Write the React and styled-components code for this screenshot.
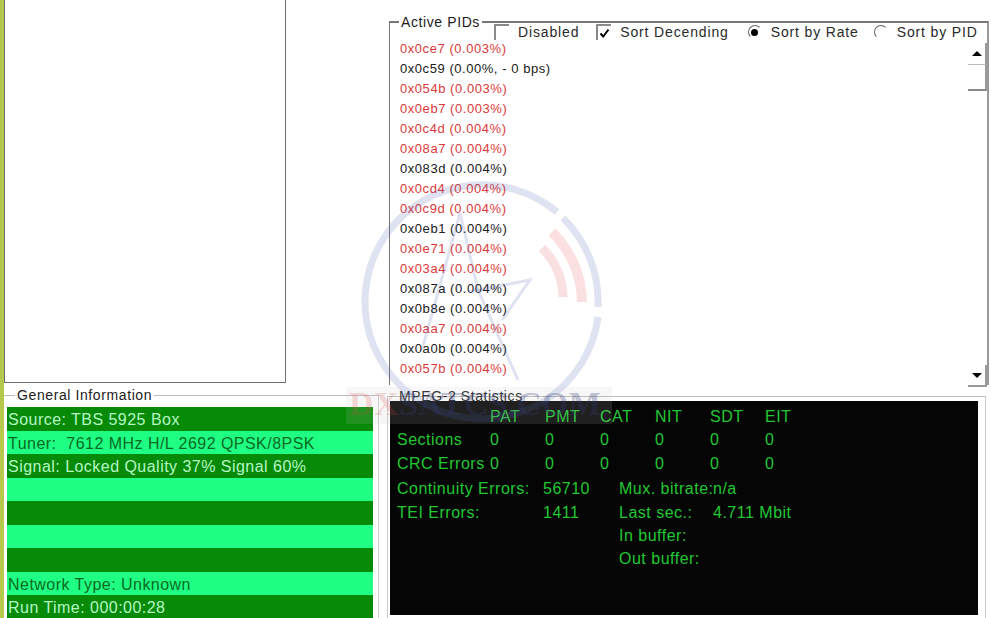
import React from "react";
import styled, { createGlobalStyle } from "styled-components";

const Global = createGlobalStyle`
  html, body { margin: 0; padding: 0; background: #fff; }
  body { width: 991px; height: 618px; overflow: hidden; font-family: "Liberation Sans", Arial, sans-serif; }
`;

const Page = styled.div`
  position: relative;
  width: 991px;
  height: 618px;
  overflow: hidden;
  display: grid;
  grid-template-columns: 4px 381px 606px;
  background: #fff;
  color: #1c1c1c;
  font-size: 14px;
  letter-spacing: 0.6px;
`;

const OliveStrip = styled.div`
  background: #b7c94c;
`;

const LeftColumn = styled.div`
  display: flex;
  flex-direction: column;
  min-width: 0;
`;

const EmptyPanel = styled.div`
  width: 282px;
  height: 383px;
  box-sizing: border-box;
  border: 1px solid #6e6e6e;
  border-top: 0;
  flex: none;
`;

const RightColumn = styled.div`
  display: flex;
  flex-direction: column;
  padding-left: 4px;
  padding-top: 21px;
  min-width: 0;
`;

const Legend = styled.span`
  position: absolute;
  top: ${(p) => p.$top}px;
  left: ${(p) => p.$left}px;
  background: ${(p) => (p.$clear ? "transparent" : "#fff")};
  padding: 0 2px;
  line-height: 16px;
  white-space: nowrap;
`;

const PidsGroup = styled.section`
  position: relative;
  width: 600px;
  height: 364px;
  flex: none;
  box-sizing: border-box;
  border-top: 2px solid #777;
  border-left: 1px solid #777;
  border-right: 2px solid #999;
`;

const ControlRow = styled.div`
  display: flex;
  align-items: center;
  height: 18px;
  padding-left: 104px;
  color: #2a2a2a;
  letter-spacing: 0.85px;
  white-space: nowrap;
`;

const Option = styled.label`
  display: flex;
  align-items: center;
  gap: ${(p) => p.$gap}px;
  margin-right: ${(p) => p.$after}px;
`;

const CheckBox = styled.span`
  box-sizing: border-box;
  width: 15px;
  height: 16px;
  border-top: 2px solid #8a8a8a;
  border-left: 2px solid #8a8a8a;
  display: flex;
  align-items: center;
  justify-content: center;
`;

const Radio = styled.span`
  box-sizing: border-box;
  width: 14px;
  height: 14px;
  border-radius: 50%;
  border: 1.5px solid transparent;
  border-top-color: #666;
  border-left-color: #666;
  display: flex;
  align-items: center;
  justify-content: center;
  &::after {
    content: "";
    display: ${(p) => (p.$on ? "block" : "none")};
    width: 7px;
    height: 7px;
    border-radius: 50%;
    background: #000;
  }
`;

const PidList = styled.ul`
  list-style: none;
  margin: -2px 0 0;
  padding: 0 0 0 10px;
`;

const PidRow = styled.li`
  height: 20px;
  line-height: 20px;
  font-size: 13px;
  letter-spacing: 0.55px;
  white-space: nowrap;
  color: ${(p) => (p.$red ? "#dc3a3a" : "#202020")};
`;

const ScrollBar = styled.div`
  position: absolute;
  top: 20px;
  right: 0;
  bottom: -2px;
  width: 19px;
  display: flex;
  flex-direction: column;
`;

const ScrollButton = styled.div`
  height: 22px;
  flex: none;
  display: flex;
  align-items: center;
  justify-content: center;
  box-sizing: border-box;
  border-right: 2px solid #999;
  border-bottom: ${(p) => (p.$up ? "1px solid #bbb" : "2px solid #999")};
`;

const ScrollThumb = styled.div`
  height: 26px;
  flex: none;
  box-sizing: border-box;
  border-right: 2px solid #999;
  border-bottom: 2px solid #888;
`;

const ScrollTrack = styled.div`
  flex: 1;
`;

const Arrow = styled.span`
  width: 0;
  height: 0;
  border-left: 5px solid transparent;
  border-right: 5px solid transparent;
  ${(p) => (p.$up ? "border-bottom: 5px solid #000;" : "border-top: 5px solid #000;")}
`;

const InfoGroup = styled.section`
  position: relative;
  margin-top: 12px;
  flex: 1;
  box-sizing: border-box;
  width: 375px;
  border-top: 1px solid #bbb;
  border-right: 1px solid #ccc;
  padding: 11px 5px 0 3px;
`;

const InfoRow = styled.div`
  height: 23.5px;
  line-height: 25px;
  padding-left: 1px;
  font-size: 16px;
  letter-spacing: 0.47px;
  white-space: pre;
  background: ${(p) => (p.$dark ? "#068a08" : "#1fff84")};
  color: ${(p) => (p.$dark ? "#b4f7c2" : "#0a6a20")};
`;

const StatsGroup = styled.section`
  position: relative;
  margin-top: 11px;
  margin-left: -2px;
  flex: 1;
  width: 599px;
  box-sizing: border-box;
  border-top: 1px solid #bbb;
  border-left: 1px solid #ccc;
  border-right: 1px solid #ccc;
  padding: 4px 7px 4px 2px;
  display: flex;
`;

const Screen = styled.div`
  flex: 1;
  background: #050505;
  color: #22c832;
  font-size: 16px;
  letter-spacing: 0.5px;
  padding: 4px 0 0 7px;
  overflow: hidden;
`;

const TableGrid = styled.div`
  display: grid;
  grid-template-columns: 93px repeat(6, 55px);
  grid-auto-rows: 23.4px;
  line-height: 23px;
  white-space: nowrap;
`;

const TotalsGrid = styled.div`
  margin-top: 2px;
  display: grid;
  grid-template-columns: 146px 76px 94px 90px;
  grid-auto-rows: 23.4px;
  line-height: 23px;
  white-space: nowrap;
`;

const Spacer = styled.span`
  grid-column: ${(p) => p.$span || "auto"};
`;

const Watermark = styled.div`
  position: absolute;
  inset: 0;
  pointer-events: none;
`;

const MarkArt = styled.svg`
  position: absolute;
  left: 350px;
  top: 170px;
  width: 262px;
  height: 260px;
`;

const MarkBand = styled.div`
  position: absolute;
  left: 346px;
  top: 387px;
  width: 266px;
  height: 37px;
  background: rgba(200, 200, 200, 0.14);
`;

const MarkText = styled.div`
  position: absolute;
  left: 349px;
  top: 385px;
  font-family: "Liberation Serif", serif;
  font-weight: 700;
  font-size: 34px;
  line-height: 38px;
  letter-spacing: 0.4px;
  white-space: nowrap;
  color: rgba(50, 60, 120, 0.3);
`;

const MarkRed = styled.span`
  color: rgba(220, 70, 70, 0.2);
`;

const pids = [
  ["0x0ce7 (0.003%)", 1], ["0x0c59 (0.00%, - 0 bps)", 0], ["0x054b (0.003%)", 1], ["0x0eb7 (0.003%)", 1],
  ["0x0c4d (0.004%)", 1], ["0x08a7 (0.004%)", 1], ["0x083d (0.004%)", 0], ["0x0cd4 (0.004%)", 1],
  ["0x0c9d (0.004%)", 1], ["0x0eb1 (0.004%)", 0], ["0x0e71 (0.004%)", 1], ["0x03a4 (0.004%)", 1],
  ["0x087a (0.004%)", 0], ["0x0b8e (0.004%)", 0], ["0x0aa7 (0.004%)", 1], ["0x0a0b (0.004%)", 0],
  ["0x057b (0.004%)", 1],
];

const info = [
  "Source: TBS 5925 Box",
  "Tuner:  7612 MHz H/L 2692 QPSK/8PSK",
  "Signal: Locked Quality 37% Signal 60%",
  "", "", "", "",
  "Network Type: Unknown",
  "Run Time: 000:00:28",
];

const heads = ["", "PAT", "PMT", "CAT", "NIT", "SDT", "EIT"];
const zeros = ["0", "0", "0", "0", "0", "0"];

export default function App() {
  return (
    <Page>
      <Global />
      <OliveStrip />
      <LeftColumn>
        <EmptyPanel />
        <InfoGroup>
          <Legend $top={-9} $left={11}>General Information</Legend>
          {info.map((t, i) => (
            <InfoRow key={i} $dark={i % 2 === 0}>{t}</InfoRow>
          ))}
        </InfoGroup>
      </LeftColumn>
      <RightColumn>
        <PidsGroup>
          <Legend $top={-9} $left={9}>Active PIDs</Legend>
          <ControlRow>
            <Option $gap={9} $after={17}><CheckBox />Disabled</Option>
            <Option $gap={9} $after={19}>
              <CheckBox>
                <svg width="11" height="11" viewBox="0 0 11 11"><path d="M1.5 5.5 L4.2 8.5 L9.5 1.5" fill="none" stroke="#000" strokeWidth="2" /></svg>
              </CheckBox>
              Sort Decending
            </Option>
            <Option $gap={9} $after={15}><Radio $on />Sort by Rate</Option>
            <Option $gap={9} $after={0}><Radio />Sort by PID</Option>
          </ControlRow>
          <PidList>
            {pids.map(([t, r]) => (
              <PidRow key={t} $red={!!r}>{t}</PidRow>
            ))}
          </PidList>
          <ScrollBar>
            <ScrollButton $up><Arrow $up /></ScrollButton>
            <ScrollThumb />
            <ScrollTrack />
            <ScrollButton><Arrow /></ScrollButton>
          </ScrollBar>
        </PidsGroup>
        <StatsGroup>
          <Legend $top={-9} $left={9} $clear>MPEG-2 Statistics</Legend>
          <Screen>
            <TableGrid>
              {heads.map((h, i) => <span key={i}>{h}</span>)}
              <span>Sections</span>
              {zeros.map((z, i) => <span key={i}>{z}</span>)}
              <span>CRC Errors</span>
              {zeros.map((z, i) => <span key={i}>{z}</span>)}
            </TableGrid>
            <TotalsGrid>
              <span>Continuity Errors:</span><span>56710</span><span>Mux. bitrate:</span><span>n/a</span>
              <span>TEI Errors:</span><span>1411</span><span>Last sec.:</span><span>4.711 Mbit</span>
              <Spacer $span="span 2" /><span>In buffer:</span><span />
              <Spacer $span="span 2" /><span>Out buffer:</span><span />
            </TotalsGrid>
          </Screen>
        </StatsGroup>
      </RightColumn>
      <Watermark>
        <MarkArt viewBox="0 0 262 260">
          <g fill="none" stroke="#3f56ad" strokeOpacity="0.17">
            <path d="M 248 147 A 117 117 0 1 1 207 42" strokeWidth="7" />
            <path d="M 213 48 A 117 117 0 0 1 248 137" strokeWidth="7" />
            <path d="M 110 43 L 128 120 L 168 210 M 110 43 L 72 180" strokeWidth="3" />
            <path d="M 118 122 L 180 110 L 152 150" strokeWidth="3" />
          </g>
          <g fill="none" stroke="#e04a4a" strokeOpacity="0.17">
            <path d="M 202 62 A 100 100 0 0 1 232 132" strokeWidth="10" />
            <path d="M 192 78 A 72 72 0 0 1 213 127" strokeWidth="9" />
          </g>
        </MarkArt>
        <MarkBand />
        <MarkText><MarkRed>DX</MarkRed>SATCS.COM</MarkText>
      </Watermark>
    </Page>
  );
}
